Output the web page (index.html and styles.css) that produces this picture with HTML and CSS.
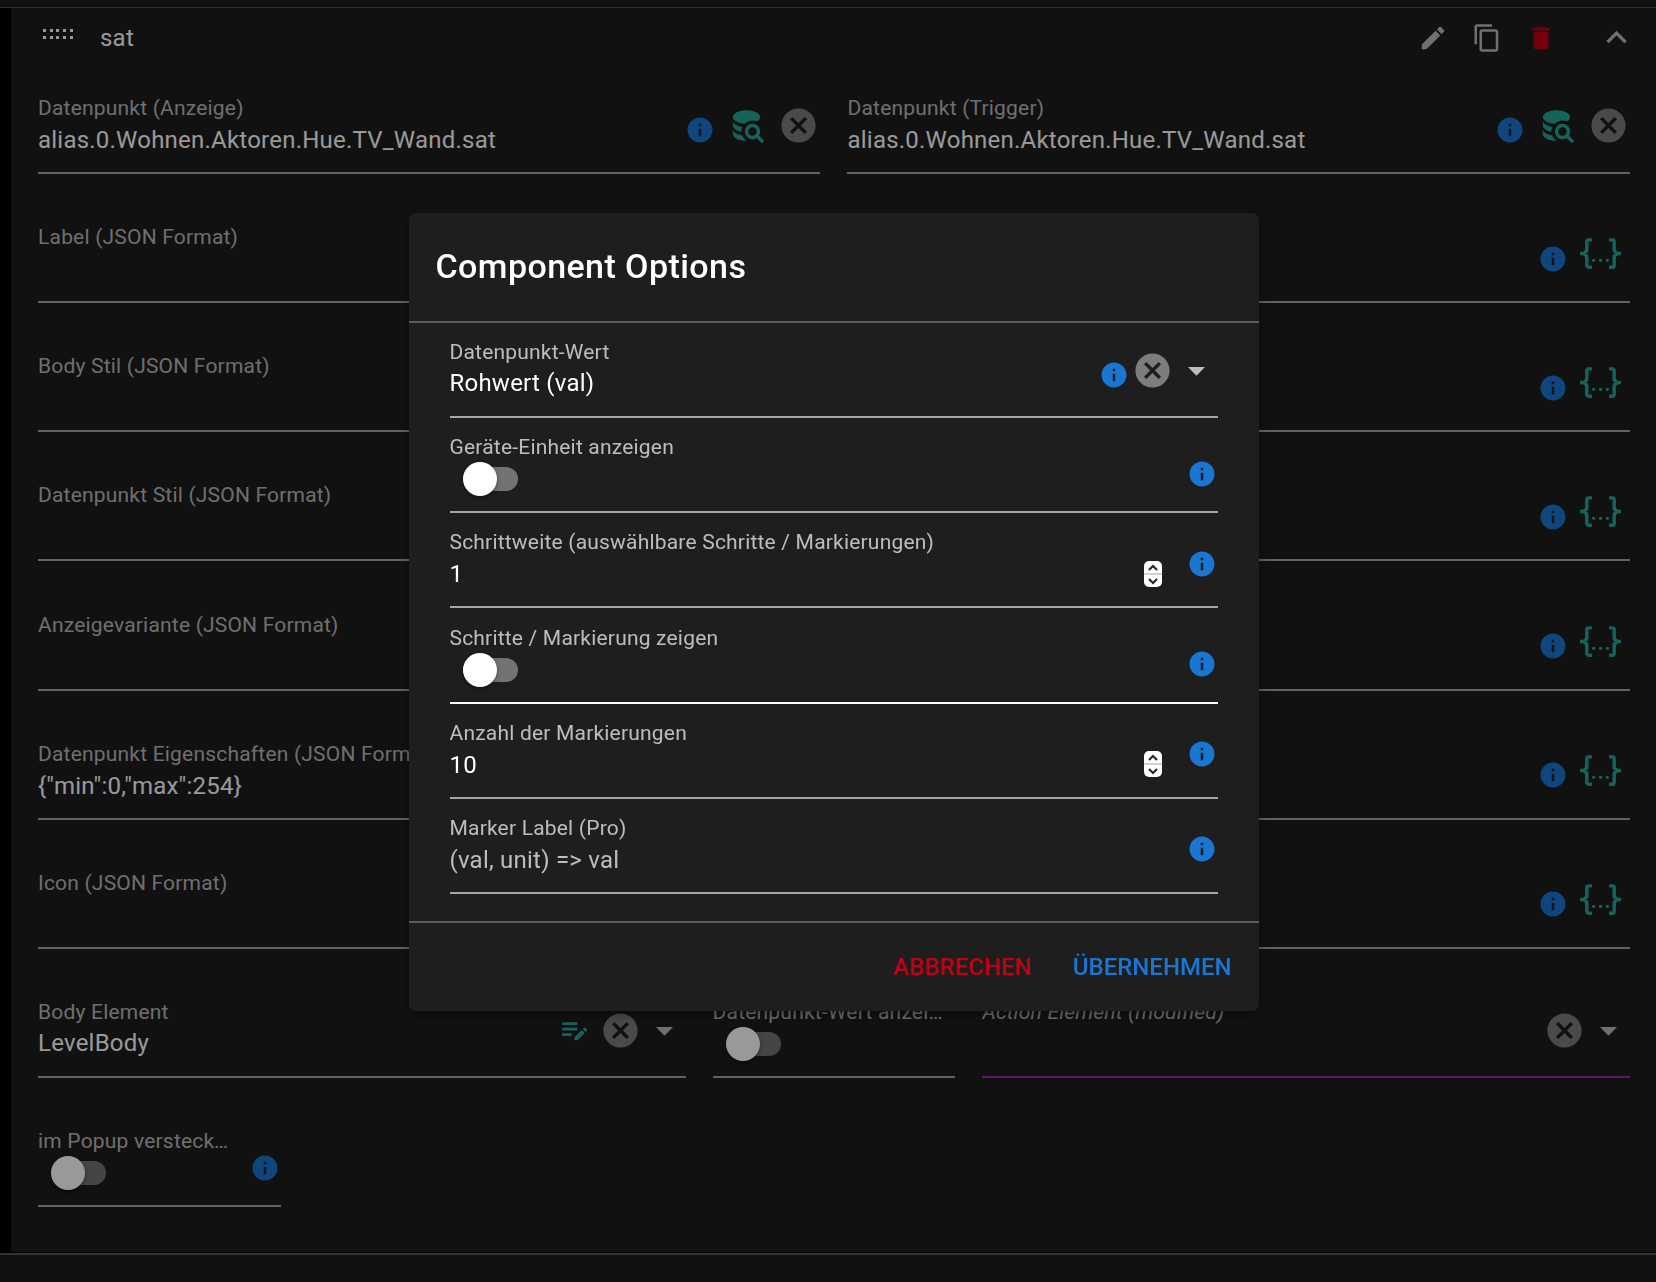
FILE: index.html
```html
<!DOCTYPE html>
<html lang="de">
<head>
<meta charset="utf-8">
<meta name="viewport" content="width=device-width, initial-scale=1">
<title>Component Options</title>
<link rel="stylesheet" href="styles.css">
</head>
<body>
<svg class="sprite" aria-hidden="true">
  <symbol id="i-info" viewBox="0 0 24 24"><path d="M12 2C6.48 2 2 6.48 2 12s4.48 10 10 10 10-4.48 10-10S17.52 2 12 2zm1 15h-2v-6h2v6zm0-8h-2V7h2v2z"/></symbol>
  <symbol id="i-cancel" viewBox="0 0 24 24"><path d="M12 2C6.47 2 2 6.47 2 12s4.47 10 10 10 10-4.47 10-10S17.53 2 12 2zm5 13.59L15.59 17 12 13.41 8.41 17 7 15.59 10.59 12 7 8.41 8.41 7 12 10.59 15.59 7 17 8.41 13.41 12 17 15.59z"/></symbol>
  <symbol id="i-caret" viewBox="0 0 24 24"><path d="M7 10l5 5 5-5z"/></symbol>
  <symbol id="i-json" viewBox="0 0 24 24"><path d="M5 3h2v2H5v5a2 2 0 0 1-2 2 2 2 0 0 1 2 2v5h2v2H5c-1.07-.27-2-.9-2-2v-4a2 2 0 0 0-2-2H0v-2h1a2 2 0 0 0 2-2V5a2 2 0 0 1 2-2m14 0a2 2 0 0 1 2 2v4a2 2 0 0 0 2 2h1v2h-1a2 2 0 0 0-2 2v4a2 2 0 0 1-2 2h-2v-2h2v-5a2 2 0 0 1 2-2 2 2 0 0 1-2-2V5h-2V3h2m-7 12a1 1 0 1 1 0 2 1 1 0 0 1 0-2m-4 0a1 1 0 1 1 0 2 1 1 0 0 1 0-2m8 0a1 1 0 1 1 0 2 1 1 0 0 1 0-2z"/></symbol>
  <symbol id="i-dbsearch" viewBox="0 0 24 24"><path d="M18.68 12.32a4.49 4.49 0 0 0-6.36.01 4.49 4.49 0 0 0 0 6.36 4.508 4.508 0 0 0 5.57.63L21 22.39 22.39 21l-3.09-3.11c1.13-1.77.87-4.09-.62-5.57m-1.41 4.95c-.98.98-2.56.97-3.54 0-.97-.98-.97-2.56.01-3.54.97-.97 2.55-.97 3.53 0 .97.98.97 2.56 0 3.54M10.9 20.1a6.527 6.527 0 0 1-1.48-2.32C6.27 17.25 4 15.76 4 14v3c0 2.21 3.58 4 8 4-.4-.26-.77-.56-1.1-.9M4 9v3c0 1.68 2.07 3.12 5 3.7v-.2c0-.93.2-1.85.58-2.69C6.34 12.3 4 10.79 4 9m8-6C7.58 3 4 4.79 4 7c0 2 3 3.68 6.85 4h.05c1.2-1.26 2.86-2 4.6-2 .91 0 1.81.19 2.64.56A3.215 3.215 0 0 0 20 7c0-2.21-3.58-4-8-4z"/></symbol>
  <symbol id="i-editnote" viewBox="0 0 24 24"><path d="M3 10h11v2H3v-2zm0-2h11V6H3v2zm0 8h7v-2H3v2zm15.01-5.03.71-.71a.996.996 0 0 1 1.41 0l.71.71c.39.39.39 1.02 0 1.41l-.71.71-2.12-2.12zm-.71.71-5.3 5.3v2.12h2.12l5.3-5.3-2.12-2.12z"/></symbol>
  <symbol id="i-pencil" viewBox="0 0 24 24"><path d="M3 17.25V21h3.75L17.81 9.94l-3.75-3.75L3 17.25zM20.71 7.04a.996.996 0 0 0 0-1.41l-2.34-2.34a.996.996 0 0 0-1.41 0l-1.83 1.83 3.75 3.75 1.83-1.83z"/></symbol>
  <symbol id="i-copy" viewBox="0 0 24 24"><path d="M16 1H4c-1.1 0-2 .9-2 2v14h2V3h12V1zm3 4H8c-1.1 0-2 .9-2 2v14c0 1.1.9 2 2 2h11c1.1 0 2-.9 2-2V7c0-1.1-.9-2-2-2zm0 16H8V7h11v14z"/></symbol>
  <symbol id="i-trash" viewBox="0 0 24 24"><path d="M6 19c0 1.1.9 2 2 2h8c1.1 0 2-.9 2-2V7H6v12zM19 4h-3.5l-1-1h-5l-1 1H5v2h14V4z"/></symbol>
  <symbol id="i-up" viewBox="0 0 24 24"><path d="M12 8l-6 6 1.41 1.41L12 10.83l4.59 4.58L18 14z"/></symbol>
</svg>

<main class="page">
  <section class="panel">
    <header class="panel-head">
      <svg class="drag" viewBox="0 0 30 18" aria-hidden="true"><path d="M0 0h3v3H0zM7 0h3v3H7zM13 0h3v3h-3zM20 0h3v3h-3zM27 0h3v3h-3zM0 7h3v3H0zM7 7h3v3H7zM13 7h3v3h-3zM20 7h3v3h-3zM27 7h3v3h-3z"/></svg>
      <h2 class="panel-title">sat</h2>
      <button class="icon-btn" type="button" aria-label="Bearbeiten"><svg class="icon-sm"><use href="#i-pencil"/></svg></button>
      <button class="icon-btn" type="button" aria-label="Kopieren"><svg class="icon-sm"><use href="#i-copy"/></svg></button>
      <button class="icon-btn danger" type="button" aria-label="Löschen"><svg class="icon-sm"><use href="#i-trash"/></svg></button>
      <button class="icon-btn collapse" type="button" aria-label="Einklappen"><svg class="icon-lg"><use href="#i-up"/></svg></button>
    </header>

    <form class="form">
      <div class="field half">
        <div class="field-main"><label class="label" for="dp-show">Datenpunkt (Anzeige)</label><input class="value" id="dp-show" type="text" value="alias.0.Wohnen.Aktoren.Hue.TV_Wand.sat"></div>
        <div class="field-icons"><svg class="icon-sm info"><use href="#i-info"/></svg><button class="icon-btn accent" type="button" aria-label="Suchen"><svg class="icon-lg"><use href="#i-dbsearch"/></svg></button><button class="icon-btn clear" type="button" aria-label="Leeren"><svg class="icon-lg"><use href="#i-cancel"/></svg></button></div>
      </div>
      <div class="field half">
        <div class="field-main"><label class="label" for="dp-trigger">Datenpunkt (Trigger)</label><input class="value" id="dp-trigger" type="text" value="alias.0.Wohnen.Aktoren.Hue.TV_Wand.sat"></div>
        <div class="field-icons"><svg class="icon-sm info"><use href="#i-info"/></svg><button class="icon-btn accent" type="button" aria-label="Suchen"><svg class="icon-lg"><use href="#i-dbsearch"/></svg></button><button class="icon-btn clear" type="button" aria-label="Leeren"><svg class="icon-lg"><use href="#i-cancel"/></svg></button></div>
      </div>
      <div class="field json">
        <div class="field-main"><label class="label" for="j1">Label (JSON Format)</label><input class="value" id="j1" type="text"></div>
        <div class="field-icons"><svg class="icon-sm info"><use href="#i-info"/></svg><button class="icon-btn accent" type="button" aria-label="JSON bearbeiten"><svg class="icon-lg"><use href="#i-json"/></svg></button></div>
      </div>
      <div class="field json">
        <div class="field-main"><label class="label" for="j2">Body Stil (JSON Format)</label><input class="value" id="j2" type="text"></div>
        <div class="field-icons"><svg class="icon-sm info"><use href="#i-info"/></svg><button class="icon-btn accent" type="button" aria-label="JSON bearbeiten"><svg class="icon-lg"><use href="#i-json"/></svg></button></div>
      </div>
      <div class="field json">
        <div class="field-main"><label class="label" for="j3">Datenpunkt Stil (JSON Format)</label><input class="value" id="j3" type="text"></div>
        <div class="field-icons"><svg class="icon-sm info"><use href="#i-info"/></svg><button class="icon-btn accent" type="button" aria-label="JSON bearbeiten"><svg class="icon-lg"><use href="#i-json"/></svg></button></div>
      </div>
      <div class="field json">
        <div class="field-main"><label class="label" for="j4">Anzeigevariante (JSON Format)</label><input class="value" id="j4" type="text"></div>
        <div class="field-icons"><svg class="icon-sm info"><use href="#i-info"/></svg><button class="icon-btn accent" type="button" aria-label="JSON bearbeiten"><svg class="icon-lg"><use href="#i-json"/></svg></button></div>
      </div>
      <div class="field json">
        <div class="field-main"><label class="label" for="j5">Datenpunkt Eigenschaften (JSON Format)</label><input class="value" id="j5" type="text" value="{&quot;min&quot;:0,&quot;max&quot;:254}"></div>
        <div class="field-icons"><svg class="icon-sm info"><use href="#i-info"/></svg><button class="icon-btn accent" type="button" aria-label="JSON bearbeiten"><svg class="icon-lg"><use href="#i-json"/></svg></button></div>
      </div>
      <div class="field json">
        <div class="field-main"><label class="label" for="j6">Icon (JSON Format)</label><input class="value" id="j6" type="text"></div>
        <div class="field-icons"><svg class="icon-sm info"><use href="#i-info"/></svg><button class="icon-btn accent" type="button" aria-label="JSON bearbeiten"><svg class="icon-lg"><use href="#i-json"/></svg></button></div>
      </div>
      <div class="field wide select">
        <div class="field-main"><label class="label" for="body-el">Body Element</label><select class="value" id="body-el"><option>LevelBody</option></select></div>
        <div class="field-icons"><button class="icon-btn accent edit" type="button" aria-label="Optionen bearbeiten"><svg class="icon-md"><use href="#i-editnote"/></svg></button><button class="icon-btn clear" type="button" aria-label="Leeren"><svg class="icon-lg"><use href="#i-cancel"/></svg></button><svg class="icon-lg caret"><use href="#i-caret"/></svg></div>
      </div>
      <div class="field narrow">
        <div class="field-main"><label class="label" for="dp-value">Datenpunkt-Wert anzeigen</label><input class="toggle" id="dp-value" type="checkbox" role="switch"></div>
      </div>
      <div class="field wide select modified">
        <div class="field-main"><label class="label" for="action-el">Action Element (modified)</label><select class="value" id="action-el"><option></option></select></div>
        <div class="field-icons"><button class="icon-btn clear" type="button" aria-label="Leeren"><svg class="icon-lg"><use href="#i-cancel"/></svg></button><svg class="icon-lg caret"><use href="#i-caret"/></svg></div>
      </div>
      <div class="field narrow switch">
        <div class="field-main"><label class="label" for="popup-hide">im Popup verstecken</label><input class="toggle" id="popup-hide" type="checkbox" role="switch"></div>
        <div class="field-icons"><svg class="icon-sm info"><use href="#i-info"/></svg></div>
      </div>
    </form>
  </section>
</main>

<div class="backdrop">
  <div class="dialog" role="dialog" aria-modal="true" aria-labelledby="dlg-title">
    <h1 class="dialog-title" id="dlg-title">Component Options</h1>
    <form class="dialog-body">
      <div class="field select">
        <div class="field-main"><label class="label" for="o1">Datenpunkt-Wert</label><select class="value" id="o1"><option>Rohwert (val)</option></select></div>
        <div class="field-icons"><svg class="icon-sm info"><use href="#i-info"/></svg><button class="icon-btn clear" type="button" aria-label="Leeren"><svg class="icon-lg"><use href="#i-cancel"/></svg></button><svg class="icon-lg caret"><use href="#i-caret"/></svg></div>
      </div>
      <div class="field switch">
        <div class="field-main"><label class="label" for="o2">Geräte-Einheit anzeigen</label><input class="toggle" id="o2" type="checkbox" role="switch"></div>
        <div class="field-icons"><svg class="icon-sm info"><use href="#i-info"/></svg></div>
      </div>
      <div class="field">
        <div class="field-main"><label class="label" for="o3">Schrittweite (auswählbare Schritte / Markierungen)</label>
          <div class="number"><input class="value" id="o3" type="number" value="1"><svg class="spinner" viewBox="0 0 18 26"><rect class="spin-box" width="18" height="26" rx="5"/><path class="spin-rule" d="M0 13h18"/><path class="spin-arrow" d="M5 9l4-4 4 4M5 18l4 4 4-4"/></svg></div></div>
        <div class="field-icons"><svg class="icon-sm info"><use href="#i-info"/></svg></div>
      </div>
      <div class="field switch hovered">
        <div class="field-main"><label class="label" for="o4">Schritte / Markierung zeigen</label><input class="toggle" id="o4" type="checkbox" role="switch"></div>
        <div class="field-icons"><svg class="icon-sm info"><use href="#i-info"/></svg></div>
      </div>
      <div class="field">
        <div class="field-main"><label class="label" for="o5">Anzahl der Markierungen</label>
          <div class="number"><input class="value" id="o5" type="number" value="10"><svg class="spinner" viewBox="0 0 18 26"><rect class="spin-box" width="18" height="26" rx="5"/><path class="spin-rule" d="M0 13h18"/><path class="spin-arrow" d="M5 9l4-4 4 4M5 18l4 4 4-4"/></svg></div></div>
        <div class="field-icons"><svg class="icon-sm info"><use href="#i-info"/></svg></div>
      </div>
      <div class="field">
        <div class="field-main"><label class="label" for="o6">Marker Label (Pro)</label><input class="value" id="o6" type="text" placeholder="(val, unit) =&gt; val"></div>
        <div class="field-icons"><svg class="icon-sm info"><use href="#i-info"/></svg></div>
      </div>
    </form>
    <footer class="dialog-actions">
      <button class="btn negative" type="button">ABBRECHEN</button>
      <button class="btn primary" type="button">ÜBERNEHMEN</button>
    </footer>
  </div>
</div>
</body>
</html>
```

FILE: styles.css
```css
:root {
  --dark: #1d1d1d;
  --text: #fff;
  --muted: rgba(255, 255, 255, 0.7);
  --line: rgba(255, 255, 255, 0.6);
  --separator: rgba(255, 255, 255, 0.28);
  --primary: #1976d2;
  --secondary: #26a69a;
  --accent: #9c27b0;
  --negative: #c10015;
}

* { box-sizing: border-box; }

body {
  margin: 0;
  min-height: 100vh;
  background: var(--dark);
  color: var(--text);
  font: 24px/32px Roboto, "Liberation Sans", sans-serif;
  letter-spacing: 0.00937em;
}

button, input, select {
  font: inherit;
  letter-spacing: inherit;
  color: inherit;
}

.sprite { position: absolute; width: 0; height: 0; }

/* Panel */
.page { padding-top: 7px; }

.panel {
  border-top: 1px solid #4f4f4f;
  border-bottom: 2px solid #555;
  box-shadow: inset 11px 0 #000, inset 0 -1px #000;
  padding: 0 0 46px 11px;
}

.panel-head {
  display: flex;
  align-items: center;
  gap: 24px;
  height: 59px;
  padding: 0 19px 0 32px;
}

.drag { width: 30px; height: 18px; fill: #fff; }

.panel-title {
  flex: 1;
  margin: 0 0 0 3px;
  font-size: 24px;
  font-weight: 400;
}

.icon-btn {
  display: flex;
  padding: 0;
  border: 0;
  background: none;
  color: var(--muted);
  cursor: pointer;
}

.icon-sm { width: 30px; height: 30px; fill: currentColor; }
.icon-md { width: 33px; height: 33px; fill: currentColor; }
.icon-lg { width: 41px; height: 41px; fill: currentColor; }

.danger { color: var(--negative); }
.accent { color: var(--secondary); }
.clear { opacity: 0.6; }
.collapse { margin-left: 16px; }
.edit { margin-right: 6px; }

/* Fields */
.form {
  display: grid;
  grid-template-columns: repeat(12, minmax(0, 1fr));
  gap: 34px 27px;
  align-content: space-between;
  min-height: 1140px;
  padding: 12px 26px 0 27px;
}

.half { grid-column: span 6; }
.json { grid-column: 1 / -1; }
.wide { grid-column: span 5; }
.narrow { grid-column: span 2; }

.field {
  display: flex;
  min-width: 0;
  height: 95px;
  border-bottom: 2px solid var(--line);
}

.hovered { border-color: #fff; }
.modified { border-color: var(--accent); }
.modified .label { font-style: italic; }

.field-main {
  display: flex;
  flex: 1;
  flex-direction: column;
  min-width: 0;
  padding-top: 14px;
}

.label {
  overflow: hidden;
  color: var(--muted);
  font-size: 21px;
  line-height: 30px;
  letter-spacing: 0.00937em;
  text-overflow: ellipsis;
  white-space: nowrap;
}

.narrow .label { padding-right: 8px; }
.switch .label { padding-right: 0; }

.value {
  width: 100%;
  height: 32px;
  padding: 0;
  border: 0;
  outline: 0;
  background: none;
  appearance: none;
}

input.value { margin-top: 1px; }

.value::placeholder { color: var(--muted); opacity: 1; }

.value[type="number"] { appearance: textfield; }
.value[type="number"]::-webkit-inner-spin-button { display: none; }

.field-icons {
  display: flex;
  align-items: center;
  gap: 12px;
  padding: 0 1px 0 20px;
}

.half .field-icons { gap: 11px; }
.select .field-icons { gap: 3px; padding-top: 2px; }
.json .field-icons { padding-right: 9px; }
.json .icon-btn { margin-bottom: 2px; }

.info { margin-top: 8px; color: var(--primary); }
.switch .info { margin-top: 18px; }
.caret { color: var(--muted); }

.toggle {
  position: relative;
  width: 55px;
  height: 34px;
  margin: 0 0 0 13px;
  appearance: none;
}

.toggle::before {
  content: "";
  position: absolute;
  inset: 5px 0;
  border-radius: 12px;
  background: #fff;
  opacity: 0.38;
}

.toggle::after {
  content: "";
  position: absolute;
  top: 0;
  left: 0;
  width: 34px;
  height: 34px;
  border-radius: 50%;
  background: #fff;
  box-shadow: 0 2px 4px rgba(0, 0, 0, 0.4);
}

.number { display: flex; align-items: center; padding-right: 5px; }
.spinner { flex: none; width: 18px; height: 26px; }
.spin-box { fill: #fff; }
.spin-rule { stroke: #d0d0d0; stroke-width: 2; }
.spin-arrow { fill: none; stroke: #222; stroke-width: 2; }

/* Dialog */
.backdrop {
  position: fixed;
  inset: 0;
  display: flex;
  align-items: center;
  justify-content: center;
  padding: 0 0 58px 11px;
  background: rgba(0, 0, 0, 0.4);
}

.dialog {
  width: 100%;
  max-width: 850px;
  border-radius: 7px;
  background: #1e1e1e;
  box-shadow: 0 2px 9px rgba(0, 0, 0, 0.2), 0 7px 9px rgba(0, 0, 0, 0.14), 0 2px 17px rgba(0, 0, 0, 0.12);
}

.dialog-title {
  margin: 0;
  padding: 26px 27px 28px;
  border-bottom: 2px solid var(--separator);
  font-size: 34px;
  font-weight: 500;
  line-height: 54px;
  letter-spacing: 0.0125em;
}

.dialog-body {
  display: flex;
  flex-direction: column;
  justify-content: space-between;
  min-height: 598px;
  padding: 0 41px 27px;
}

.dialog-actions {
  display: flex;
  justify-content: flex-end;
  gap: 13px;
  padding: 14px 13px;
  border-top: 2px solid var(--separator);
}

.btn {
  height: 60px;
  padding: 0 14px;
  border: 0;
  background: none;
  font-weight: 500;
  letter-spacing: normal;
  cursor: pointer;
}

.negative { color: var(--negative); }
.primary { color: var(--primary); }
```
